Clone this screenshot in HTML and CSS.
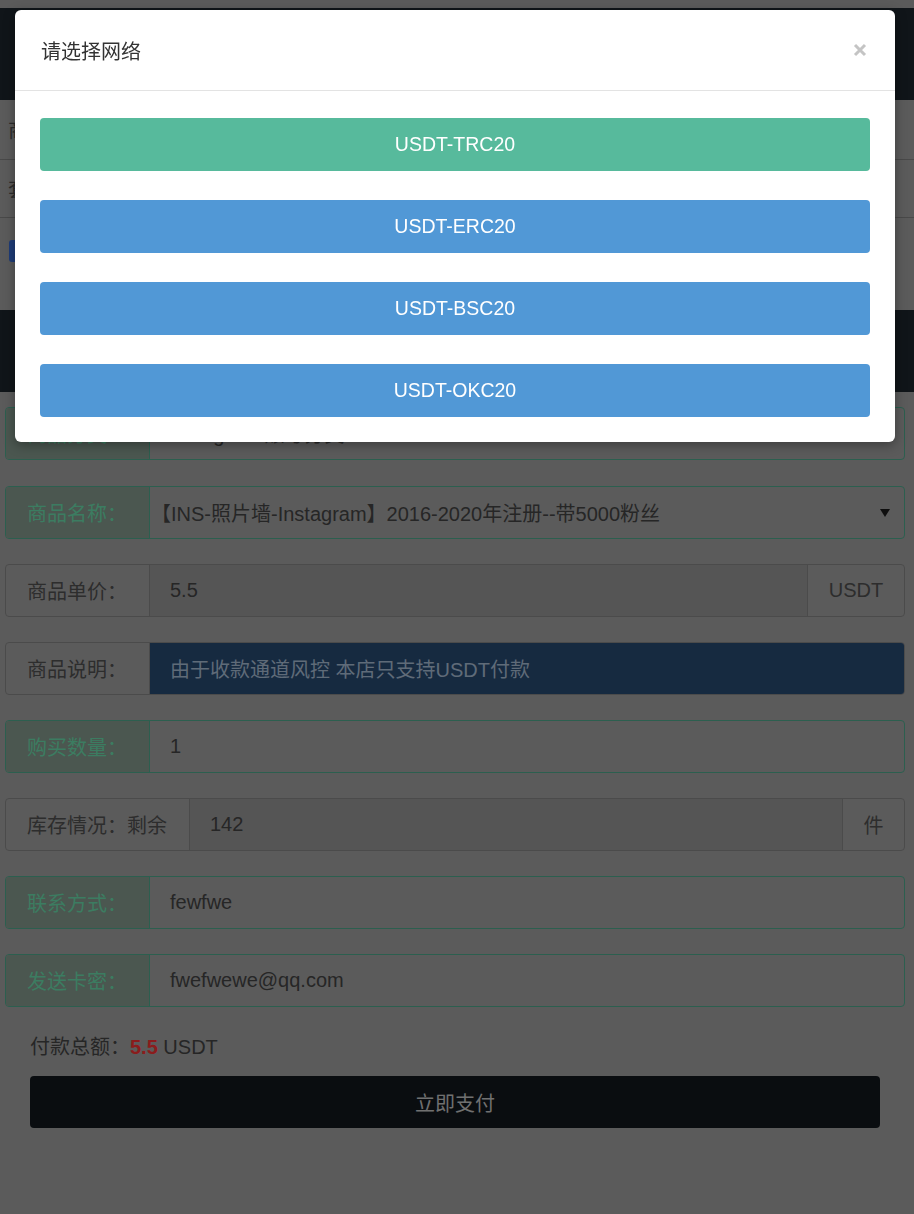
FILE: index.html
```html
<!DOCTYPE html>
<html>
<head>
    <meta charset="UTF-8">
    <meta name="viewport" content="width=device-width, initial-scale=1.0">
    <title>USDT 支付</title>
    <link rel="stylesheet" href="styles.css">
</head>
<body>

    <div class="page">
        <div class="topbar"></div>

        <div class="info-list">
            <div class="info-row first">商品分类</div>
            <div class="info-row">套餐选择</div>
            <div class="info-row pay-row"><span class="pay-tag"></span></div>
        </div>

        <div class="banner"></div>

        <form class="order-form">
            <div class="field green">
                <div class="field-label">商品分类：</div>
                <div class="field-input">Instagram 账号分类</div>
            </div>
            <div class="field green">
                <div class="field-label">商品名称：</div>
                <div class="field-input select">【INS-照片墙-Instagram】2016-2020年注册--带5000粉丝<span class="caret"></span></div>
            </div>
            <div class="field">
                <div class="field-label">商品单价：</div>
                <div class="field-input readonly">5.5</div>
                <div class="field-addon usdt">USDT</div>
            </div>
            <div class="field">
                <div class="field-label">商品说明：</div>
                <div class="field-input notice">由于收款通道风控 本店只支持USDT付款</div>
            </div>
            <div class="field green">
                <div class="field-label">购买数量：</div>
                <div class="field-input">1</div>
            </div>
            <div class="field">
                <div class="field-label wide">库存情况：剩余</div>
                <div class="field-input readonly">142</div>
                <div class="field-addon unit">件</div>
            </div>
            <div class="field green">
                <div class="field-label">联系方式：</div>
                <div class="field-input">fewfwe</div>
            </div>
            <div class="field green">
                <div class="field-label">发送卡密：</div>
                <div class="field-input">fwefwewe@qq.com</div>
            </div>

            <div class="total">付款总额：<b class="price">5.5</b> USDT</div>
            <button type="button" class="pay-button">立即支付</button>
        </form>
    </div>

    <div class="shade"></div>

    <div class="modal">
        <div class="modal-header">
            <span class="modal-title">请选择网络</span>
            <svg class="modal-close" width="14" height="14" viewBox="0 0 14 14">
                <path d="M2 2 L12 12 M12 2 L2 12" stroke="#c4c4c4" stroke-width="3"/>
            </svg>
        </div>
        <div class="modal-body">
            <button class="net-button trc">USDT-TRC20</button>
            <button class="net-button">USDT-ERC20</button>
            <button class="net-button">USDT-BSC20</button>
            <button class="net-button">USDT-OKC20</button>
        </div>
    </div>

</body>
</html>
```

FILE: styles.css
```css
body {
    margin: 0;
    font-family: "Liberation Sans", "Noto Sans CJK SC", sans-serif;
    background-color: #989898;
    color: #404040;
}
.page {
    padding-top: 8px;
    min-height: 1206px;
}
.topbar {
    height: 92px;
    background-color: #1c232a;
}
.info-row {
    height: 57px;
    border-bottom: 1px solid #7b7b7b;
    padding-left: 8px;
    display: flex;
    align-items: center;
    font-size: 20px;
    color: #4b4b4b;
}
.info-row.first {
    height: 59px;
}
.info-row.pay-row {
    height: 92px;
    border-bottom: none;
    align-items: flex-start;
    padding-top: 22px;
    padding-left: 9px;
    box-sizing: border-box;
}
.pay-tag {
    display: inline-block;
    width: 40px;
    height: 22px;
    border-radius: 3px;
    background-color: #3264c8;
}
.banner {
    height: 82px;
    background-color: #1c232a;
}
.order-form {
    padding: 15px 9px 0 5px;
}
.field {
    display: flex;
    height: 53px;
    box-sizing: border-box;
    border: 1px solid #7d7d7d;
    border-radius: 4px;
    margin-bottom: 25px;
    font-size: 20px;
    overflow: hidden;
}
.field:first-child {
    margin-bottom: 26px;
}
.field-label {
    width: 144px;
    flex-shrink: 0;
    border-right: 1px solid #7d7d7d;
    padding-left: 21px;
    box-sizing: border-box;
    display: flex;
    align-items: center;
    color: #4b4b4b;
}
.field-label.wide {
    width: 184px;
}
.field-input {
    flex: 1;
    display: flex;
    align-items: center;
    padding-left: 20px;
    color: #404040;
}
.field-input.select {
    padding-left: 1px;
    padding-right: 14px;
    justify-content: space-between;
}
.caret {
    width: 0;
    height: 0;
    border-left: 5px solid transparent;
    border-right: 5px solid transparent;
    border-top: 8px solid #1a1a1a;
}
.field-input.readonly {
    background-color: #8e8e8e;
}
.field-input.notice {
    background-color: #26466b;
    color: #9eb2c8;
}
.field-addon {
    flex-shrink: 0;
    border-left: 1px solid #7d7d7d;
    display: flex;
    align-items: center;
    justify-content: center;
    color: #4b4b4b;
}
.field-addon.usdt {
    width: 96px;
}
.field-addon.unit {
    width: 61px;
}
.field.green {
    border-color: #4a9e84;
}
.field.green .field-label {
    border-right-color: #4a9e84;
    background-color: #7d9185;
    color: #64cfa2;
}
.total {
    padding-left: 25px;
    height: 30px;
    line-height: 30px;
    font-size: 20px;
    color: #404040;
}
.price {
    color: #e82f2f;
}
.pay-button {
    display: block;
    margin: 14px 0 0 25px;
    width: 850px;
    height: 52px;
    border: none;
    border-radius: 4px;
    background-color: #12171c;
    color: #bbbbbb;
    font-family: "Liberation Sans", "Noto Sans CJK SC", sans-serif;
    font-size: 20px;
}
.shade {
    position: fixed;
    top: 0;
    left: 0;
    right: 0;
    bottom: 0;
    background-color: rgba(0, 0, 0, 0.4);
}
.modal {
    position: absolute;
    top: 10px;
    left: 15px;
    width: 880px;
    background-color: #fff;
    border-radius: 6px;
    box-shadow: 0 3px 12px rgba(0, 0, 0, 0.35);
}
.modal-header {
    height: 80px;
    border-bottom: 1px solid #e3e3e3;
    display: flex;
    align-items: center;
    justify-content: space-between;
    padding: 0 28px 0 26px;
}
.modal-title {
    font-size: 20px;
    color: #333;
}
.modal-body {
    padding: 27px 25px 25px;
}
.net-button {
    display: block;
    width: 100%;
    height: 53px;
    margin-bottom: 29px;
    border: none;
    border-radius: 4px;
    background-color: #5198d6;
    color: #fff;
    font-family: "Liberation Sans", "Noto Sans CJK SC", sans-serif;
    font-size: 19.5px;
}
.net-button:last-child {
    margin-bottom: 0;
}
.net-button.trc {
    background-color: #57ba9c;
}
```
